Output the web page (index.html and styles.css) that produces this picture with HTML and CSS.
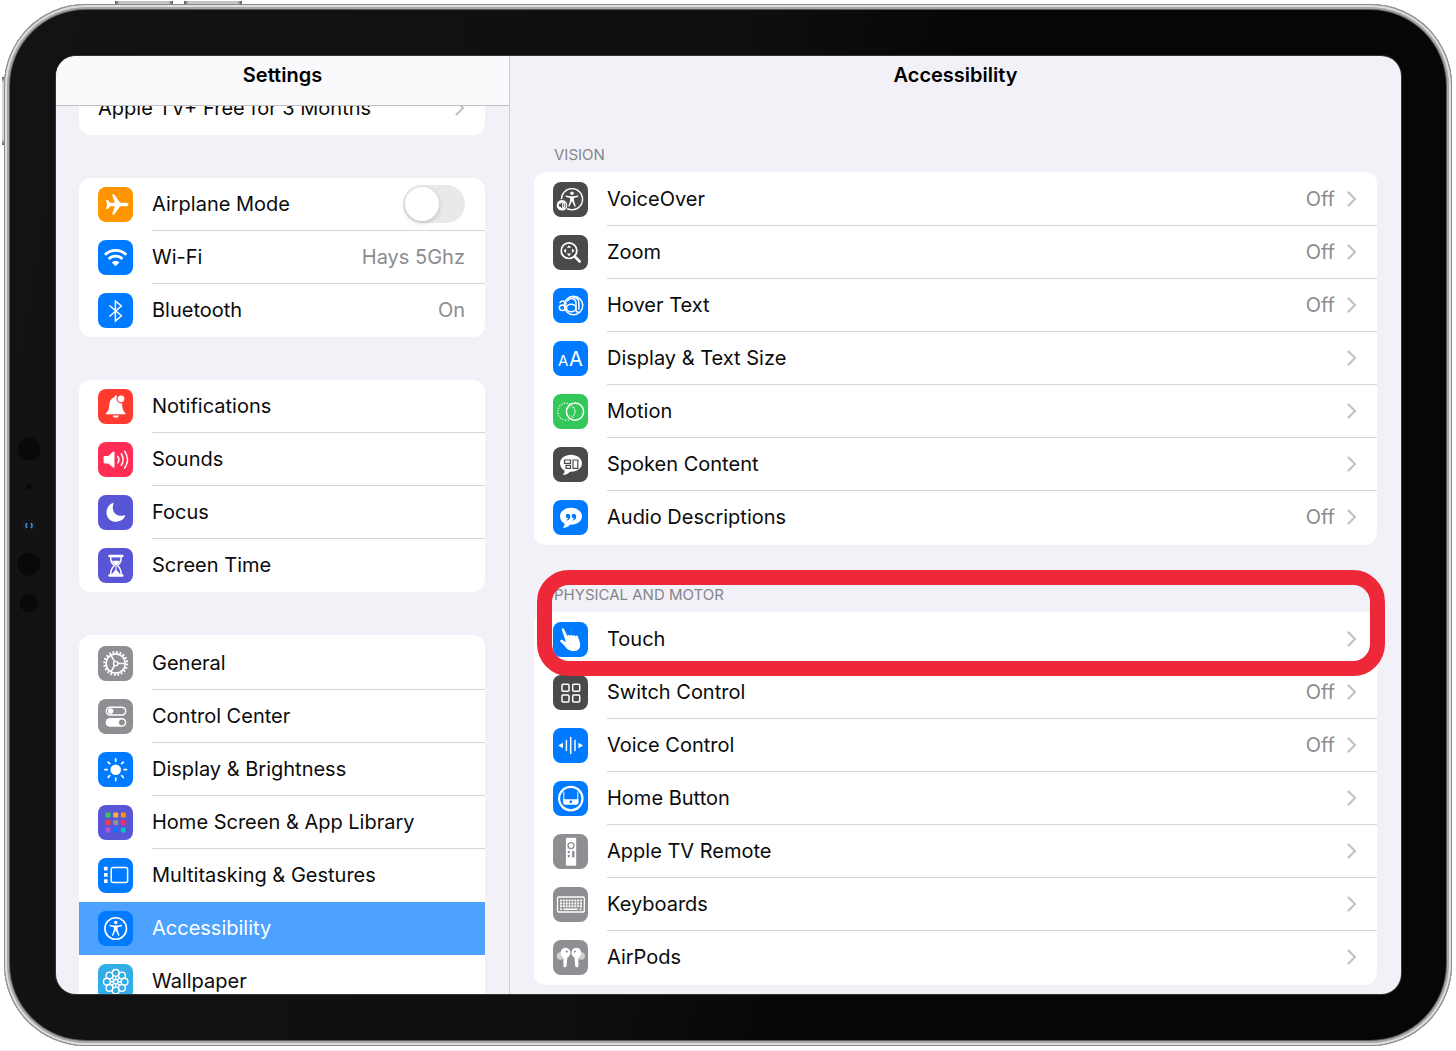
FILE: index.html
```html
<!DOCTYPE html>
<html lang="en">
<head>
<meta charset="utf-8">
<meta name="viewport" content="width=device-width, initial-scale=1">
<title>Settings – Accessibility</title>
<link rel="stylesheet" href="styles.css">
</head>
<body>
<svg class="defs" aria-hidden="true">
  <symbol id="chevron" viewBox="0 0 10 16"><path d="M1.500 1.500 8 8l-6.500 6.500" fill="none" stroke="currentColor" stroke-width="2.200" stroke-linecap="round" stroke-linejoin="round"/></symbol>
  <symbol id="person" viewBox="0 0 24 24"><circle cx="12" cy="5.800" r="1.900"/><path d="M5.500 8.300c-.8-.2-.6 1.300.1 1.500l4.300 1.100v3l-1.900 5.500c-.3 1 1 1.300 1.400.5l2.300-5.100h.6l2.300 5.100c.4.800 1.700.5 1.400-.5l-1.900-5.500v-3l4.300-1.100c.7-.2.9-1.700.1-1.500l-4.500.7h-4z"/></symbol>
</svg>
<div class="device">
  <span class="hw hw-top-a"></span>
  <span class="hw hw-top-b"></span>
  <span class="hw hw-side"></span>
  <div class="sensors" aria-hidden="true">
    <svg viewBox="0 0 24 176"><g fill="#090909"><circle cx="12" cy="12" r="11.500"/><circle cx="12" cy="50" r="2.500"/><circle cx="12" cy="127" r="11.500"/><circle cx="12" cy="166" r="9"/></g><circle cx="12" cy="88.500" r="6" fill="#1d1d1f"/><circle cx="12" cy="88.500" r="4.800" fill="#0a0d12"/><path d="M10 86q-2 2.500 0 5M14 86q2 2.500 0 5" fill="none" stroke="#3a86cc" stroke-width="1.800"/></svg>
  </div>
  <div class="screen">
    <aside class="sidebar">
      <header class="bar bar-side"><h1>Settings</h1></header>
      <nav class="side-list" aria-label="Settings">
        <div class="card">
          <a class="row" href="#offer"><span class="cell"><span class="label">Apple TV+ Free for 3 Months</span><svg class="chev"><use href="#chevron"/></svg></span></a>
        </div>
        <div class="card">
          <label class="row" for="airplane">
            <svg class="icon orange" viewBox="0 0 35 35"><path fill="#fff" d="M30.500 17.500c0-1-1.200-1.800-3-1.800h-5.300L16.200 7.500H14l2.800 8.200h-4.600l-2.300-2.800H8l1.100 4.600L8 22h1.900l2.300-2.700h4.600L14 27.600h2.200l6-8.300h5.300c1.800 0 3-.8 3-1.800z"/></svg>
            <span class="cell"><span class="label">Airplane Mode</span><input class="switch" type="checkbox" role="switch" id="airplane"></span>
          </label>
          <a class="row" href="#wifi">
            <svg class="icon blue" viewBox="0 0 35 35"><g fill="none" stroke="#fff" stroke-width="2.800"><path d="M6.900 14.700a15.500 15.500 0 0 1 21.400 0"/><path d="M10.700 18.900a10 10 0 0 1 13.800 0"/></g><path fill="#fff" d="M13.800 22.400a5.400 5.400 0 0 1 7.600 0l-3.800 3.900z"/></svg>
            <span class="cell"><span class="label">Wi-Fi</span><span class="value">Hays 5Ghz</span></span>
          </a>
          <a class="row" href="#bluetooth">
            <svg class="icon blue" viewBox="0 0 35 35"><path d="M11.500 12.500 23.400 22.800l-6 5.300V8l6 5-11.900 10.500" fill="none" stroke="#fff" stroke-width="1.500"/></svg>
            <span class="cell"><span class="label">Bluetooth</span><span class="value">On</span></span>
          </a>
        </div>
        <div class="card">
          <a class="row" href="#notifications">
            <svg class="icon red" viewBox="0 0 35 35"><path fill="#fff" d="M8 25.200c-.5-1.800 2.600-2.300 3-6.200.4-4.600.6-9.600 5.300-10.600 0-2.500 3.400-2.500 3.400 0 4.300 1 4.400 6 4.800 10.600.4 3.900 3.500 4.400 3 6.200zM14.800 26.600h6c-.6 2.900-5.400 2.900-6 0z"/><circle cx="23" cy="9.800" r="4" fill="#fff" stroke="#ff3b30" stroke-width="1.200"/></svg>
            <span class="cell"><span class="label">Notifications</span></span>
          </a>
          <a class="row" href="#sounds">
            <svg class="icon pink" viewBox="0 0 35 35"><path fill="#fff" d="M6.800 14h3.500l4.700-4.200c.7-.6 1.500-.3 1.500.6v14.400c0 .9-.8 1.200-1.500.6L10.300 21.400H6.800c-.8 0-1.200-.4-1.200-1.100v-5.200c0-.7.4-1.100 1.200-1.100z"/><path d="M19.800 14.300q2.200 3.300 0 6.600M23.200 11.800q4 5.800 0 11.600M26.700 9.300q5.600 8.300 0 16.600" fill="none" stroke="#fff" stroke-width="1.500" stroke-linecap="round"/></svg>
            <span class="cell"><span class="label">Sounds</span></span>
          </a>
          <a class="row" href="#focus">
            <svg class="icon purple" viewBox="0 0 35 35"><path fill="#fff" d="M14.800 7.900c.6-.2 1 .2.700.9-2.800 7.600 3 14.200 10.900 11.400.7-.2 1.100.2.800.9C23.700 29.500 8.500 28.800 8.500 17.200c0-4.500 2.700-8 6.300-9.300z"/></svg>
            <span class="cell"><span class="label">Focus</span></span>
          </a>
          <a class="row" href="#screen-time">
            <svg class="icon purple" viewBox="0 0 35 35"><path d="M12.600 8.500c0 5 .8 6.300 3.700 9-2.900 2.700-3.700 4.500-3.700 9.500h10.600c0-5-.8-6.800-3.700-9.500 2.900-2.700 3.700-4 3.700-9z" fill="none" stroke="#fff" stroke-width="1.500"/><path d="M11.500 8h12.800M11.500 27.500h12.800" stroke="#fff" stroke-width="2.600" stroke-linecap="round"/><path fill="#fff" d="M14 12.800h7.800c-.5 2-2.300 3-3.400 4.400v4.600l3.500 4.200h-8l3.500-4.200v-4.600c-1.100-1.400-2.900-2.400-3.400-4.400z"/></svg>
            <span class="cell"><span class="label">Screen Time</span></span>
          </a>
        </div>
        <div class="card open">
          <a class="row" href="#general">
            <svg class="icon gray" viewBox="0 0 35 35"><g fill="none" stroke="#fff"><circle cx="17.700" cy="17.500" r="9.600" stroke-width="1.700"/><circle cx="17.700" cy="17.500" r="11.400" stroke-width="2.200" stroke-dasharray="1.800 1.780"/><circle cx="17.700" cy="17.500" r="2.200" stroke-width="1.300"/><path d="M19.900 17.500h7.400M16.600 15.600l-3.700-6.400M16.600 19.400l-3.700 6.400" stroke-width="1.500"/></g></svg>
            <span class="cell"><span class="label">General</span></span>
          </a>
          <a class="row" href="#control-center">
            <svg class="icon gray" viewBox="0 0 35 35"><rect x="8.300" y="8.200" width="19.400" height="7.800" rx="3.900" fill="none" stroke="#fff" stroke-width="1.500"/><circle cx="12.600" cy="12.100" r="2.800" fill="#fff"/><rect x="7.600" y="19" width="20.700" height="8.800" rx="4.400" fill="#fff"/><circle cx="23.900" cy="23.400" r="2.900" fill="#8e8e93"/></svg>
            <span class="cell"><span class="label">Control Center</span></span>
          </a>
          <a class="row" href="#display">
            <svg class="icon blue" viewBox="0 0 35 35"><circle cx="17.700" cy="17.700" r="5.300" fill="#fff"/><path d="M17.700 6.900v2.300M17.700 26.200v2.300M6.900 17.700h2.300M26.200 17.700h2.300M10.100 10.100l1.600 1.600M23.700 23.700l1.600 1.600M10.100 25.300l1.600-1.600M23.700 11.700l1.600-1.600" stroke="#fff" stroke-width="1.700" stroke-linecap="round"/></svg>
            <span class="cell"><span class="label">Display &amp; Brightness</span></span>
          </a>
          <a class="row" href="#home-screen">
            <svg class="icon purple" viewBox="0 0 35 35"><g><rect x="7.500" y="7.500" width="5" height="5" rx="1" fill="#34c759"/><rect x="15.200" y="7.500" width="5" height="5" rx="1" fill="#ffb02e"/><rect x="22.800" y="7.500" width="5" height="5" rx="1" fill="#ff9500"/><rect x="7.500" y="15" width="5" height="5" rx="1" fill="#ff3b30"/><rect x="15.200" y="15" width="5" height="5" rx="1" fill="#8e8e93"/><rect x="22.800" y="15" width="5" height="5" rx="1" fill="#ff2d55"/><rect x="7.500" y="22.500" width="5" height="5" rx="1.500" fill="#af52de"/><rect x="15.200" y="22.500" width="5" height="5" rx="1.500" fill="#007aff"/><rect x="22.800" y="22.500" width="5" height="5" rx="1.500" fill="#00c7be"/></g></svg>
            <span class="cell"><span class="label">Home Screen &amp; App Library</span></span>
          </a>
          <a class="row last" href="#multitasking">
            <svg class="icon blue" viewBox="0 0 35 35"><g fill="#fff"><rect x="6" y="8.700" width="3.600" height="3.800" rx=".6"/><rect x="6" y="15" width="3.600" height="3.800" rx=".6"/><rect x="6" y="21.300" width="3.600" height="3.800" rx=".6"/></g><rect x="13.200" y="9.400" width="16.400" height="15" rx="2" fill="none" stroke="#fff" stroke-width="1.500"/></svg>
            <span class="cell"><span class="label">Multitasking &amp; Gestures</span></span>
          </a>
          <a class="row last selected" href="#accessibility" aria-current="page">
            <svg class="icon blue" viewBox="0 0 35 35"><circle cx="17.700" cy="17.500" r="10.800" fill="none" stroke="#fff" stroke-width="1.600"/><use href="#person" x="6.700" y="6.200" width="22" height="22" fill="#fff"/></svg>
            <span class="cell"><span class="label">Accessibility</span></span>
          </a>
          <a class="row last" href="#wallpaper">
            <svg class="icon cyan" viewBox="0 0 35 35"><g fill="none" stroke="#fff" stroke-width="1.400"><circle cx="17.700" cy="8.900" r="3.400"/><circle cx="23.900" cy="11.500" r="3.400"/><circle cx="26.500" cy="17.700" r="3.400"/><circle cx="23.900" cy="23.900" r="3.400"/><circle cx="17.700" cy="26.500" r="3.400"/><circle cx="11.500" cy="23.900" r="3.400"/><circle cx="8.900" cy="17.700" r="3.400"/><circle cx="11.500" cy="11.500" r="3.400"/><circle cx="17.700" cy="17.700" r="2.200"/><path d="M17.700 12.300v3.200M17.700 19.900v3.200M12.300 17.700h3.200M19.900 17.700h3.200M13.900 13.900l2.200 2.200M19.300 19.300l2.200 2.200M13.900 21.500l2.200-2.200M19.300 16.100l2.200-2.200"/></g></svg>
            <span class="cell"><span class="label">Wallpaper</span></span>
          </a>
        </div>
      </nav>
    </aside>
    <main class="detail">
      <header class="bar"><h2>Accessibility</h2></header>
      <section class="group">
        <h3>VISION</h3>
        <div class="card pad">
          <a class="row" href="#voiceover">
            <svg class="icon dark" viewBox="0 0 35 35"><circle cx="19" cy="17.300" r="10.600" fill="none" stroke="#fff" stroke-width="1.300"/><use href="#person" x="8" y="6" width="22" height="22" fill="#fff"/><circle cx="9" cy="23.300" r="5.800" fill="#fff" stroke="#4a4a4a" stroke-width="1"/><path fill="#4a4a4a" d="M5.800 22h1.400l2-1.800v6.200l-2-1.800H5.800z"/><path d="M10.400 21.800q1 1.500 0 3M12 20.800q1.600 2.500 0 5" fill="none" stroke="#4a4a4a" stroke-width=".8"/></svg>
            <span class="cell"><span class="label">VoiceOver</span><span class="value">Off</span><svg class="chev"><use href="#chevron"/></svg></span>
          </a>
          <a class="row" href="#zoom">
            <svg class="icon dark" viewBox="0 0 35 35"><circle cx="16" cy="15.700" r="7.800" fill="none" stroke="#fff" stroke-width="1.700"/><path d="m21.700 21.500 5 5" stroke="#fff" stroke-width="2.600" stroke-linecap="round"/><path fill="#fff" d="m16 10.200 2.200 2.600h-4.400zM16 21.200l2.200-2.600h-4.400zM10.500 15.700l2.600-2.200v4.400zM21.500 15.700l-2.600-2.200v4.400z"/></svg>
            <span class="cell"><span class="label">Zoom</span><span class="value">Off</span><svg class="chev"><use href="#chevron"/></svg></span>
          </a>
          <a class="row" href="#hover-text">
            <svg class="icon blue" viewBox="0 0 35 35"><circle cx="20.500" cy="17.500" r="9.300" fill="none" stroke="#fff" stroke-width="1.500"/><g fill="none" stroke="#fff" stroke-width="1.500" stroke-linecap="round"><path d="M7 14.500q1.500-1.800 4-1.300 2 .5 2 3"/><ellipse cx="9.800" cy="19.700" rx="3.500" ry="2.700"/><path d="M14.300 13q2.200-3 5.400-2.300 3.300.8 3.300 4.500v7q0 2 2.200 1.800"/><ellipse cx="18.200" cy="20" rx="4.700" ry="3.700"/><path d="M20.400 9.500q5.500 0 5.500 5.700v6"/></g></svg>
            <span class="cell"><span class="label">Hover Text</span><span class="value">Off</span><svg class="chev"><use href="#chevron"/></svg></span>
          </a>
          <a class="row" href="#text-size">
            <svg class="icon blue" viewBox="0 0 35 35"><text class="glyph" x="5" y="25" font-size="15">A</text><text class="glyph" x="16" y="25" font-size="20">A</text></svg>
            <span class="cell"><span class="label">Display &amp; Text Size</span><svg class="chev"><use href="#chevron"/></svg></span>
          </a>
          <a class="row" href="#motion">
            <svg class="icon green" viewBox="0 0 35 35"><g fill="none" stroke="#fff"><circle cx="13.300" cy="17.600" r="8.500" stroke-width="1.200" stroke-dasharray="1.200 1.470"/><circle cx="18" cy="17.600" r="4.500" stroke-width=".8" stroke-dasharray=".8 1.200"/></g><circle cx="22" cy="17.600" r="8.600" fill="none" stroke="#fff" stroke-width="1.500"/></svg>
            <span class="cell"><span class="label">Motion</span><svg class="chev"><use href="#chevron"/></svg></span>
          </a>
          <a class="row" href="#spoken-content">
            <svg class="icon dark" viewBox="0 0 35 35"><path fill="#fff" d="M18 7.800c6.300 0 11 3.700 11 8.500s-4.700 8.500-11 8.500h-1c-1.500 1.800-4 3-6.300 3.200-.6 0-.7-.5-.3-.9 1-.9 1.300-2.200 1.100-3.500C8.800 22.100 7 19.400 7 16.300c0-4.800 4.700-8.500 11-8.500z"/><path d="M11.500 13h6v3.300h-6zM13 18.300h4.500v3H13zM20 13h4.800v8.300H20z" fill="none" stroke="#4a4a4a" stroke-width="1.200"/></svg>
            <span class="cell"><span class="label">Spoken Content</span><svg class="chev"><use href="#chevron"/></svg></span>
          </a>
          <a class="row" href="#audio-descriptions">
            <svg class="icon blue" viewBox="0 0 35 35"><path fill="#fff" d="M18 7.800c6.300 0 11 3.700 11 8.500s-4.700 8.500-11 8.500h-1c-1.500 1.800-4 3-6.300 3.200-.6 0-.7-.5-.3-.9 1-.9 1.300-2.200 1.100-3.500C8.800 22.100 7 19.400 7 16.300c0-4.800 4.700-8.500 11-8.500z"/><path fill="#007aff" d="M12.800 15.800c0-3 4.500-2.700 4.500.7 0 2-1.500 3.700-3.200 4.100-.8.100-.9-.5-.3-.8.700-.3 1.200-.9 1.300-1.600-1.300.2-2.300-.9-2.300-2.400zM18.700 15.800c0-3 4.500-2.700 4.500.7 0 2-1.500 3.700-3.200 4.100-.8.100-.9-.5-.3-.8.700-.3 1.200-.9 1.300-1.600-1.300.2-2.300-.9-2.300-2.400z"/></svg>
            <span class="cell"><span class="label">Audio Descriptions</span><span class="value">Off</span><svg class="chev"><use href="#chevron"/></svg></span>
          </a>
        </div>
      </section>
      <section class="group">
        <span class="highlight"></span>
        <h3>PHYSICAL AND MOTOR</h3>
        <div class="card pad">
          <a class="row" href="#touch">
            <svg class="icon blue" viewBox="0 0 35 35"><path fill="#fff" d="M8.900 8c-.5-1.600 1.500-2.300 2.200-.8l3.400 7c.3-1.500 2-1.500 2.500-.3.500-1.300 2.200-1.300 2.700 0 .5-1.100 2.200-1 2.700.3.700-1.200 2.200-.8 2.700.7l1.600 5.100c1.600 5-.6 8.700-5 9.100-5.300.5-8.200-2.300-10-5-1-1.500-2.700-3-4-4.200-1.300-1.400 0-2.700 1.700-2 1.200.5 2.300 1.300 3.200 2.100.3-.2.100-.7-.1-1.300z"/></svg>
            <span class="cell"><span class="label">Touch</span><svg class="chev"><use href="#chevron"/></svg></span>
          </a>
          <a class="row" href="#switch-control">
            <svg class="icon dark" viewBox="0 0 35 35"><g fill="none" stroke="#fff" stroke-width="1.500"><rect x="9" y="9.300" width="7" height="7" rx="1"/><rect x="19.700" y="9.300" width="7" height="7" rx="1"/><rect x="9" y="20" width="7" height="7" rx="1"/><rect x="19.700" y="20" width="7" height="7" rx="1"/></g></svg>
            <span class="cell"><span class="label">Switch Control</span><span class="value">Off</span><svg class="chev"><use href="#chevron"/></svg></span>
          </a>
          <a class="row" href="#voice-control">
            <svg class="icon blue" viewBox="0 0 35 35"><path d="M13.400 12.500v10M17.700 9.500v16M22 12.500v10" stroke="#fff" stroke-width="1.500" stroke-linecap="round"/><path fill="#fff" d="m5.200 17.500 4.800-2.700v5.400zM30.200 17.500l-4.800-2.700v5.400z"/></svg>
            <span class="cell"><span class="label">Voice Control</span><span class="value">Off</span><svg class="chev"><use href="#chevron"/></svg></span>
          </a>
          <a class="row" href="#home-button">
            <svg class="icon blue" viewBox="0 0 35 35"><circle cx="17.800" cy="17.600" r="11.700" fill="none" stroke="#fff" stroke-width="2.200"/><path d="M10.800 10.500v11M24.800 10.500v11" stroke="#fff" stroke-width="1"/><path fill="#fff" d="M10.200 18.200h15.200v3.500q0 2-2 2H12.200q-2 0-2-2z"/><circle cx="17.800" cy="20.800" r="1.400" fill="#007aff"/></svg>
            <span class="cell"><span class="label">Home Button</span><svg class="chev"><use href="#chevron"/></svg></span>
          </a>
          <a class="row" href="#remote">
            <svg class="icon gray" viewBox="0 0 35 35"><rect x="12.900" y="3.800" width="10.300" height="28" rx="1.200" fill="#fff"/><circle cx="18" cy="11.600" r="3" fill="none" stroke="#8e8e93" stroke-width="1.300"/><g fill="#8e8e93"><circle cx="15.800" cy="18" r="1.200"/><circle cx="20.300" cy="18" r="1.200"/><circle cx="15.800" cy="22" r="1.200"/><rect x="19.100" y="18" width="2.400" height="5.500" rx="1.200"/></g></svg>
            <span class="cell"><span class="label">Apple TV Remote</span><svg class="chev"><use href="#chevron"/></svg></span>
          </a>
          <a class="row" href="#keyboards">
            <svg class="icon gray" viewBox="0 0 35 35"><rect x="4.500" y="10" width="26.800" height="15" rx="1.200" fill="none" stroke="#fff" stroke-width="1.300"/><path d="M7 13.500h22M7 16.500h22M7 19.300h22" stroke="#fff" stroke-width="1.900" stroke-dasharray="1.900 .970"/><path d="M7 22.200h2M10.500 22.200h14M26.500 22.200h2" stroke="#fff" stroke-width="1.600"/></svg>
            <span class="cell"><span class="label">Keyboards</span><svg class="chev"><use href="#chevron"/></svg></span>
          </a>
          <a class="row" href="#airpods">
            <svg class="icon gray" viewBox="0 0 35 35"><g fill="#d0d0d3"><circle cx="7.500" cy="16" r="3.700"/><circle cx="28.300" cy="16" r="3.700"/></g><g fill="#fff"><circle cx="12.500" cy="12.700" r="4.900"/><circle cx="23.300" cy="12.700" r="4.900"/><path d="M10.400 14h4.300l-1.200 12.300q-.1 1-1.500 1t-1.600-1zM21.100 14h4.300v12.300q-.1 1-1.600 1t-1.500-1z"/></g><path d="M13.300 10.800l1.200 1.600M22.500 10.800l-1.200 1.600" stroke="#6e6e73" stroke-width="1.300"/></svg>
            <span class="cell"><span class="label">AirPods</span><svg class="chev"><use href="#chevron"/></svg></span>
          </a>
        </div>
      </section>
    </main>
  </div>
</div>
</body>
</html>
```
FILE: styles.css
```css
* { box-sizing: border-box; }

body {
  margin: 0;
  height: 100vh;
  display: flex;
  padding: 4px 4px;
  border-bottom: 1px solid #f0f0f0;
  background: #fff;
  color: #0b0b0c;
  font-family: Inter, "Liberation Sans", sans-serif;
  font-size: 20px;
  line-height: 26px;
  overflow: hidden;
}

.defs { position: absolute; width: 0; height: 0; }

h1, h2, h3 { margin: 0; }

/* Tablet body: metal rim around a black bezel */
.device {
  position: relative;
  flex: 1;
  min-width: 0;
  display: flex;
  padding: 52px 51px 52px 52px;
  border-radius: 82px;
  background: linear-gradient(100deg, #131313, #0f0f0f 45%, #060606 60%);
  box-shadow:
    inset 0 0 0 1px #8b8b8b,
    inset 0 0 0 3px #dedede,
    inset 0 0 0 5px #a6a6a6,
    inset 0 0 0 6px #5a5a5a;
}

.hw {
  position: absolute;
  z-index: -1;
  background: linear-gradient(90deg, #555, #c4c4c4 8%, #c4c4c4 92%, #555);
}
.hw-top-a { left: 111px; top: -3px; width: 58px; height: 4px; }
.hw-top-b { left: 180px; top: -3px; width: 58px; height: 4px; }
.hw-side {
  left: -2px; top: 73px; width: 3px; height: 68px;
  background: linear-gradient(#555, #d4d4d4 8%, #d4d4d4 92%, #555);
}

.sensors { position: absolute; left: 13px; top: 433px; }
.sensors svg { display: block; width: 24px; height: 176px; }

.screen {
  flex: 1;
  min-width: 0;
  display: grid;
  grid-template-columns: 454px minmax(0, 1fr);
  grid-template-rows: minmax(0, 1fr);
  overflow: hidden;
  border-radius: 20px;
  background: #f2f1f7;
  box-shadow: 0 0 0 1px #333;
}

.sidebar {
  display: flex;
  flex-direction: column;
  min-height: 0;
  border-right: 1px solid #cfced4;
}

.bar {
  flex: none;
  height: 50px;
  display: flex;
  align-items: center;
  justify-content: center;
  padding-bottom: 12px;
}
.bar-side { background: #fafafc; border-bottom: 1px solid #bfbfc4; }
.bar h1, .bar h2 { font-size: 20px; line-height: 26px; font-weight: 600; color: #000; }

.side-list {
  flex: 1;
  min-height: 0;
  overflow: hidden;
  padding: 0 24px 0 23px;
}
.side-list .card + .card { margin-top: 43px; }
/* the list rests scrolled part-way under the title bar */
.side-list .card:first-child { margin-top: -24px; }

.detail { overflow: hidden; }
.group { position: relative; padding: 39px 24px 1px; }
.group h3 {
  padding: 0 20px 7px;
  font-size: 15px;
  line-height: 20px;
  font-weight: 400;
  color: #85858a;
}

.card { overflow: hidden; border-radius: 12px; background: #fff; }
.pad { padding: 1px 0; }
.open { padding-top: 2px; border-radius: 12px 12px 0 0; }

.row {
  display: flex;
  align-items: center;
  gap: 19px;
  height: 53px;
  padding-left: 19px;
  color: inherit;
  text-decoration: none;
}
.cell {
  flex: 1;
  min-width: 0;
  align-self: stretch;
  display: flex;
  align-items: center;
  gap: 12px;
  padding-right: 20px;
  border-bottom: 1px solid #d5d5d8;
}
.row:last-child .cell, .last .cell { border-bottom-color: transparent; }
.label { flex: 1; white-space: nowrap; }
.value { color: #8c8c90; }
.chev { flex: none; width: 10px; height: 16px; color: #c2c2c5; }
.selected { background: #4da1ff; color: #fff; }

.icon { flex: none; width: 35px; height: 35px; border-radius: 8px; }
.orange { background: #ff9500; }
.blue { background: #007aff; }
.red { background: #ff3b30; }
.pink { background: #ff2d55; }
.purple { background: #5856d6; }
.gray { background: #8e8e93; }
.cyan { background: #32ade6; }
.dark { background: #4a4a4a; }
.green { background: #34c759; }
.glyph { fill: #fff; }

.switch {
  appearance: none;
  flex: none;
  width: 62px;
  height: 38px;
  margin: 0;
  padding: 2px;
  border-radius: 19px;
  background: #e9e9ea;
}
.switch::before {
  content: "";
  display: block;
  width: 34px;
  height: 34px;
  border-radius: 50%;
  background: #fff;
  box-shadow: 0 2px 5px rgba(0, 0, 0, .18);
}
.switch:checked { background: #34c759; }
.switch:checked::before { margin-left: auto; }

/* marker ring drawn over the Touch row */
.highlight {
  position: absolute;
  z-index: 1;
  left: 27px;
  right: 16px;
  top: 24px;
  height: 106px;
  border: 15px solid #ee2739;
  border-radius: 32px;
  pointer-events: none;
}
```
